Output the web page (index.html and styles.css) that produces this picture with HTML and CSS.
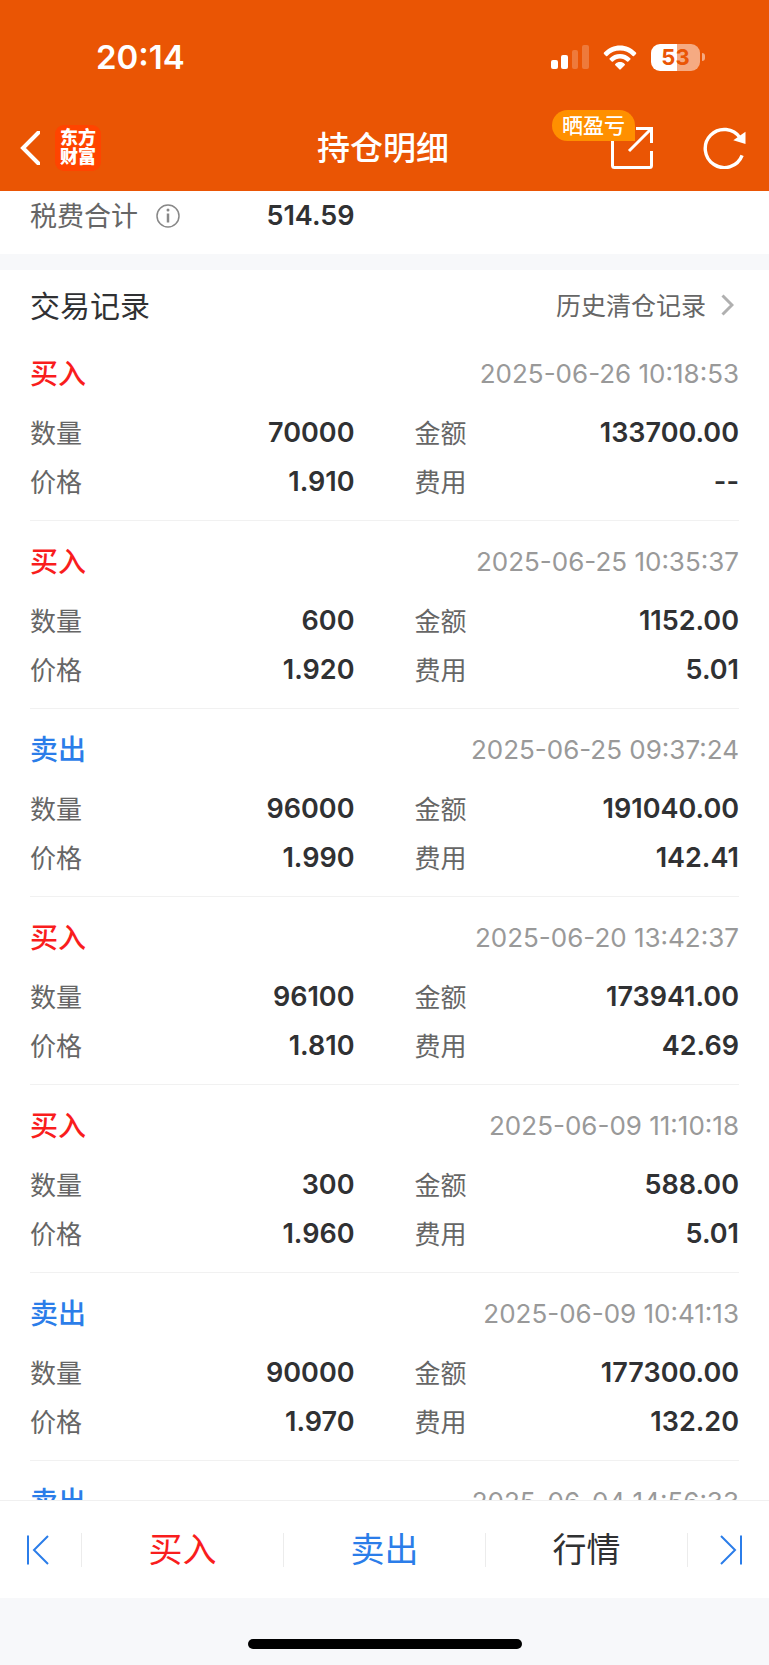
FILE: index.html
```html
<!doctype html>
<html lang="zh-CN">
<head>
	<meta charset="UTF-8">
	<meta name="viewport" content="width=device-width, initial-scale=1">
	<title>持仓明细</title>
	<link rel="stylesheet" href="styles.css">
</head>
<body>
	<header class="header">
		<div class="status">
			<span class="time">20:14</span>
			<div class="status-icons">
				<svg class="signal" width="38" height="24" viewBox="0 0 38 24" fill="#fff">
					<rect x="0" y="15" width="7" height="9" rx="2"/>
					<rect x="10" y="10" width="7" height="14" rx="2"/>
					<rect x="21" y="5" width="6" height="19" rx="2" opacity=".22"/>
					<rect x="31" y="0" width="7" height="24" rx="2" opacity=".22"/>
				</svg>
				<svg class="wifi" width="34" height="25" viewBox="0 0 34 25" fill="#fff">
					<path d="M1 7.6C5.400 3 11 .6 17 .6s11.600 2.400 16 7a.9.9 0 0 1 0 1.300l-2 2a.9.9 0 0 1-1.300 0C26.200 7.400 21.800 5.600 17 5.600S7.800 7.400 4.300 10.900a.9.9 0 0 1-1.300 0l-2-2A.9.9 0 0 1 1 7.600z"/>
					<path d="M6.700 13.200C9.500 10.400 13 8.900 17 8.900s7.500 1.500 10.300 4.300a.9.9 0 0 1 0 1.300l-2 2a.9.9 0 0 1-1.300 0c-2-1.900-4.300-2.900-7-2.900s-5 1-7 2.900a.9.9 0 0 1-1.300 0l-2-2a.9.9 0 0 1 0-1.300z"/>
					<path d="M12.300 19c1.300-1.300 2.900-1.900 4.700-1.900s3.400.6 4.700 1.900a.9.900 0 0 1 0 1.300l-4 4a1 1 0 0 1-1.400 0l-4-4a.9.9 0 0 1 0-1.300z"/>
				</svg>
				<span class="battery"><span class="battery-body">53</span></span>
			</div>
		</div>
		<nav class="nav">
			<div class="nav-left">
				<button class="icon-btn" aria-label="返回">
					<svg width="20" height="34" viewBox="0 0 20 34" fill="none" stroke="#fff" stroke-width="4">
						<path d="M18.500 1.500L3 17l15.500 15.500" stroke-linecap="round"/>
					</svg>
				</button>
				<a class="logo" href="#">东方<br>财富</a>
			</div>
			<h1 class="title">持仓明细</h1>
			<div class="nav-right">
				<button class="icon-btn share" aria-label="晒盈亏">
					<svg width="42" height="42" viewBox="0 0 42 42" fill="none" stroke="#fff" stroke-width="3">
						<path d="M1.500 8v30.500a2 2 0 0 0 2 2h35a2 2 0 0 0 2-2V24M25 1.500h15.500V16M40 2L18 24"/>
					</svg>
					<span class="badge">晒盈亏</span>
				</button>
				<button class="icon-btn" aria-label="刷新">
					<svg width="43" height="43" viewBox="0 0 44 44">
						<path d="M38 12.200A19.500 19.500 0 1 0 40 30" fill="none" stroke="#fff" stroke-width="3.500"/>
						<path d="M43.500 6v12.500L31 14.500z" fill="#fff"/>
					</svg>
				</button>
			</div>
		</nav>
	</header>

	<main class="content">
		<section class="fee">
			<div class="pair">
				<span class="label"><span>税费合计</span>
					<svg class="info" width="24" height="24" viewBox="0 0 24 24" fill="none" stroke="#888">
						<circle cx="12" cy="12" r="11" stroke-width="1.500"/>
						<path d="M12 9.500v9" stroke-width="2.500"/>
						<circle cx="12" cy="6" r="1.500" fill="#888" stroke="none"/>
					</svg>
				</span>
				<span class="value">514.59</span>
			</div>
		</section>

		<section class="records">
			<div class="section-head">
				<h2>交易记录</h2>
				<a class="history" href="#"><span>历史清仓记录</span>
					<svg width="13" height="22" viewBox="0 0 13 22" fill="none" stroke="#b0b0b0" stroke-width="3">
						<path d="M1.500 1.500L11 11l-9.500 9.500"/>
					</svg>
				</a>
			</div>

			<article class="record">
				<div class="record-head"><h3 class="buy">买入</h3><time>2025-06-26 10:18:53</time></div>
				<dl>
					<div class="pair"><dt>数量</dt><dd>70000</dd></div>
					<div class="pair"><dt>金额</dt><dd>133700.00</dd></div>
					<div class="pair"><dt>价格</dt><dd>1.910</dd></div>
					<div class="pair"><dt>费用</dt><dd>--</dd></div>
				</dl>
			</article>
			<article class="record">
				<div class="record-head"><h3 class="buy">买入</h3><time>2025-06-25 10:35:37</time></div>
				<dl>
					<div class="pair"><dt>数量</dt><dd>600</dd></div>
					<div class="pair"><dt>金额</dt><dd>1152.00</dd></div>
					<div class="pair"><dt>价格</dt><dd>1.920</dd></div>
					<div class="pair"><dt>费用</dt><dd>5.01</dd></div>
				</dl>
			</article>
			<article class="record">
				<div class="record-head"><h3 class="sell">卖出</h3><time>2025-06-25 09:37:24</time></div>
				<dl>
					<div class="pair"><dt>数量</dt><dd>96000</dd></div>
					<div class="pair"><dt>金额</dt><dd>191040.00</dd></div>
					<div class="pair"><dt>价格</dt><dd>1.990</dd></div>
					<div class="pair"><dt>费用</dt><dd>142.41</dd></div>
				</dl>
			</article>
			<article class="record">
				<div class="record-head"><h3 class="buy">买入</h3><time>2025-06-20 13:42:37</time></div>
				<dl>
					<div class="pair"><dt>数量</dt><dd>96100</dd></div>
					<div class="pair"><dt>金额</dt><dd>173941.00</dd></div>
					<div class="pair"><dt>价格</dt><dd>1.810</dd></div>
					<div class="pair"><dt>费用</dt><dd>42.69</dd></div>
				</dl>
			</article>
			<article class="record">
				<div class="record-head"><h3 class="buy">买入</h3><time>2025-06-09 11:10:18</time></div>
				<dl>
					<div class="pair"><dt>数量</dt><dd>300</dd></div>
					<div class="pair"><dt>金额</dt><dd>588.00</dd></div>
					<div class="pair"><dt>价格</dt><dd>1.960</dd></div>
					<div class="pair"><dt>费用</dt><dd>5.01</dd></div>
				</dl>
			</article>
			<article class="record">
				<div class="record-head"><h3 class="sell">卖出</h3><time>2025-06-09 10:41:13</time></div>
				<dl>
					<div class="pair"><dt>数量</dt><dd>90000</dd></div>
					<div class="pair"><dt>金额</dt><dd>177300.00</dd></div>
					<div class="pair"><dt>价格</dt><dd>1.970</dd></div>
					<div class="pair"><dt>费用</dt><dd>132.20</dd></div>
				</dl>
			</article>
			<article class="record">
				<div class="record-head"><h3 class="sell">卖出</h3><time>2025-06-04 14:56:33</time></div>
			</article>
		</section>
	</main>

	<footer class="footer">
		<div class="tabs">
			<button class="tab-arrow" aria-label="上一只">
				<svg width="22" height="30" viewBox="0 0 22 30" fill="none" stroke="#2b7de9" stroke-width="2">
					<path d="M1 .5v29M21 1L7 15l14 14"/>
				</svg>
			</button>
			<button class="tab buy">买入</button>
			<button class="tab sell">卖出</button>
			<button class="tab">行情</button>
			<button class="tab-arrow" aria-label="下一只">
				<svg width="22" height="30" viewBox="0 0 22 30" fill="none" stroke="#2b7de9" stroke-width="2">
					<path d="M21 .5v29M1 1l14 14L1 29"/>
				</svg>
			</button>
		</div>
		<div class="home-bar"></div>
	</footer>
</body>
</html>
```
FILE: styles.css
```css
*{
	box-sizing: border-box;
	margin: 0;
	padding: 0;
}
body{
	display: flex;
	flex-direction: column;
	height: 100vh;
	font-family: Inter, "Noto Sans CJK SC", sans-serif;
	color: #303133;
	background: #f7f8fa;
}
button{
	border: none;
	background: none;
	font: inherit;
	color: inherit;
	cursor: pointer;
}
a{
	color: inherit;
	text-decoration: none;
}
svg{
	display: block;
	flex: none;
}

/* 顶部 */
.header{
	flex: none;
	color: #fff;
	background: #ea5504;
}
.status{
	display: flex;
	justify-content: space-between;
	align-items: center;
	height: 106px;
	padding: 8px 64px 0 96px;
}
.time{
	font-size: 33px;
	font-weight: 600;
}
.status-icons{
	display: flex;
	align-items: center;
}
.wifi{
	margin: 0 14px;
}
.battery{
	display: flex;
	align-items: center;
	gap: 2px;
}
.battery-body{
	width: 49px;
	border-radius: 9px;
	font-size: 22px;
	line-height: 27px;
	font-weight: 700;
	text-align: center;
	color: #ea5504;
	background: linear-gradient(to right, #fff 54%, #f5aa82 54%);
}
.battery::after{
	content: "";
	width: 3px;
	height: 8px;
	border-radius: 0 3px 3px 0;
	background: #f5aa82;
}
.nav{
	display: grid;
	grid-template-columns: 1fr auto 1fr;
	align-items: center;
	height: 85px;
	padding: 0 23px 2px 20px;
}
.nav-left,
.nav-right{
	display: flex;
	align-items: center;
}
.nav-left{
	gap: 15px;
}
.nav-right{
	justify-content: flex-end;
	gap: 50px;
}
.logo{
	width: 46px;
	padding: 3px 0 5px;
	border-radius: 9px;
	font-size: 18px;
	line-height: 19px;
	font-weight: 900;
	text-align: center;
	background: #ff4400;
}
.title{
	padding-bottom: 3px;
	font-size: 33px;
	font-weight: 500;
}
.share{
	position: relative;
}
.badge{
	position: absolute;
	right: 18px;
	bottom: 28px;
	padding: 0 10px;
	border-radius: 16px 16px 0 16px;
	font-size: 21px;
	line-height: 31px;
	font-weight: 500;
	white-space: nowrap;
	background: #ff9000;
}

/* 内容 */
.content{
	flex: 1;
	min-height: 0;
	overflow-y: auto;
	scrollbar-width: none;
}
.fee,
.records{
	padding: 0 30px;
	background: #fff;
}
.fee{
	display: grid;
	grid-template-columns: 1fr 1fr;
	column-gap: 60px;
	margin-bottom: 16px;
	padding-bottom: 14px;
}
.pair{
	display: flex;
	justify-content: space-between;
	align-items: center;
	height: 49px;
}
.label,
dt{
	font-size: 26px;
	color: #666;
}
.label{
	display: flex;
	align-items: center;
	gap: 18px;
	font-size: 27px;
}
/* 中文字形偏低,往上收一点 */
dt,
.label span,
.history span,
.record-head h3{
	padding-bottom: 3px;
}
.value,
dd{
	font-size: 27px;
	font-weight: 600;
}
.section-head{
	display: flex;
	justify-content: space-between;
	align-items: center;
	height: 63px;
	padding-top: 9px;
}
.section-head h2{
	padding-bottom: 5px;
	font-size: 30px;
	font-weight: 400;
}
.history{
	display: flex;
	align-items: center;
	gap: 15px;
	padding: 0 5px 2px 0;
	font-size: 25px;
	color: #666;
}
.record{
	padding: 19px 0 14px;
	border-bottom: 1px solid #f1f1f1;
}
.record-head{
	display: flex;
	justify-content: space-between;
	align-items: center;
	height: 42px;
	margin-bottom: 14px;
}
.record-head h3{
	font-size: 28px;
	font-weight: 500;
}
time{
	font-size: 26px;
	color: #999;
}
dl{
	display: grid;
	grid-template-columns: 1fr 1fr;
	column-gap: 60px;
}
.buy{
	color: #f91d1d;
}
.sell{
	color: #2b7de9;
}

/* 底部 */
.footer{
	flex: none;
}
.tabs{
	display: flex;
	align-items: center;
	height: 98px;
	border-top: 1px solid #f0f0f0;
	background: #fff;
}
.tab{
	flex: 1;
	font-size: 34px;
	line-height: 34px;
	border-left: 1px solid #ececec;
}
.tab:nth-child(4){
	border-right: 1px solid #ececec;
}
.tab-arrow{
	display: flex;
	width: 81px;
	padding: 0 27px;
}
.tab-arrow:last-child{
	justify-content: flex-end;
}
.home-bar{
	width: 274px;
	height: 10px;
	margin: 41px auto 16px;
	border-radius: 5px;
	background: #000;
}
```
